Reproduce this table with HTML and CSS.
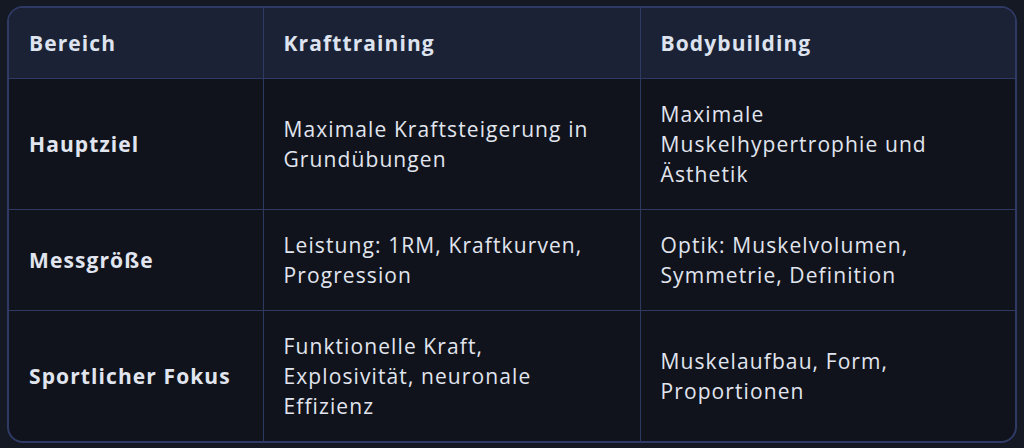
FILE: index.html
```html
<!DOCTYPE html>
<html lang="de">
<head>
<meta charset="utf-8">
<link rel="stylesheet" href="styles.css">
</head>
<body>
<div class="wrap">
<table class="cmp">
<colgroup><col class="c1"><col class="c2"><col class="c3"></colgroup>
<thead>
<tr><th>Bereich</th><th>Krafttraining</th><th>Bodybuilding</th></tr>
</thead>
<tbody>
<tr><td class="lbl">Hauptziel</td><td>Maximale Kraftsteigerung in Grundübungen</td><td>Maximale Muskelhypertrophie und Ästhetik</td></tr>
<tr><td class="lbl">Messgröße</td><td>Leistung: 1RM, Kraftkurven, Progression</td><td>Optik: Muskelvolumen, Symmetrie, Definition</td></tr>
<tr><td class="lbl">Sportlicher Fokus</td><td>Funktionelle Kraft, Explosivität, neuronale Effizienz</td><td>Muskelaufbau, Form, Proportionen</td></tr>
</tbody>
</table>
</div>
</body>
</html>
```
FILE: styles.css
```css
html, body { margin: 0; padding: 0; }
body {
  background: #151923;
  padding: 6px 7px;
  font-family: "Open Sans", "Noto Sans", sans-serif;
  color: #e1e5ef;
}
.wrap {
  border: 2px solid #2f3b66;
  border-radius: 16px;
  overflow: hidden;
  background: #10131b;
  width: 1006px;
}
.cmp {
  width: 100%;
  border-collapse: collapse;
  table-layout: fixed;
}
.c1 { width: 254px; }
.c2 { width: 377px; }
.c3 { width: auto; }
th, td {
  padding: 20px 40px 20px 20px;
  text-align: left;
  vertical-align: middle;
  font-size: 21px;
  line-height: 30px;
  letter-spacing: 1.1px;
  border: 1px solid #2e3a62;
}
tr > :first-child { border-left: none; padding-right: 10px; }
tr > :last-child { border-right: none; }
thead th { border-top: none; background: #1c2235; font-weight: 700; color: #dde3ef; }
tbody tr:last-child td { border-bottom: none; }
td.lbl { font-weight: 700; }
```
